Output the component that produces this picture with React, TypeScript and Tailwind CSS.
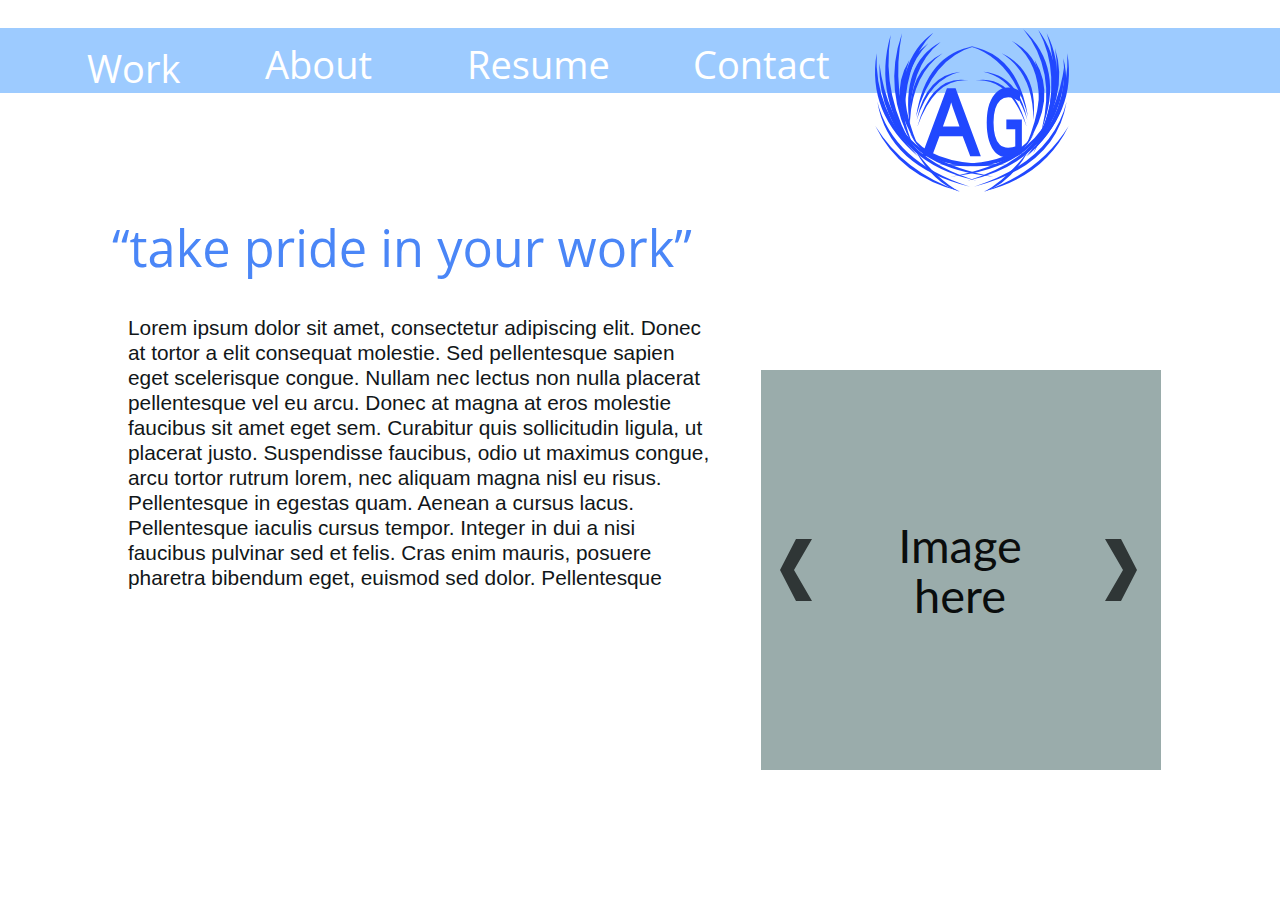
const navLinks = [
  { label: 'About', className: 'w-[202px]' },
  { label: 'Resume', className: 'w-[226px]' },
  { label: 'Contact', className: 'w-[180px]' },
];

const bodyLines = [
  'Lorem ipsum dolor sit amet, consectetur adipiscing elit. Donec',
  'at tortor a elit consequat molestie. Sed pellentesque sapien',
  'eget scelerisque congue. Nullam nec lectus non nulla placerat',
  'pellentesque vel eu arcu. Donec at magna at eros molestie',
  'faucibus sit amet eget sem. Curabitur quis sollicitudin ligula, ut',
  'placerat justo. Suspendisse faucibus, odio ut maximus congue,',
  'arcu tortor rutrum lorem, nec aliquam magna nisl eu risus.',
  'Pellentesque in egestas quam. Aenean a cursus lacus.',
  'Pellentesque iaculis cursus tempor. Integer in dui a nisi',
  'faucibus pulvinar sed et felis. Cras enim mauris, posuere',
  'pharetra bibendum eget, euismod sed dolor. Pellentesque',
];

// tip x, tip y, control x, control y, base x, base y, thickness
const sideFeathers: number[][] = [
  [50, 100, 42, 270, 175, 410, 24],
  [58, 130, 78, 290, 180, 400, 26],
  [148, 120, 110, 230, 175, 380, 32],
  [345, 78, 215, 115, 168, 290, 22],
  [302, 155, 210, 175, 170, 300, 16],
  [326, 181, 225, 172, 172, 320, 14],
  [46, 318, 120, 470, 300, 514, -18],
  [52, 245, 85, 440, 330, 500, -20],
  [72, 225, 110, 430, 350, 482, -20],
  [110, 300, 165, 445, 400, 470, -20],
  [150, 340, 205, 465, 438, 432, -24],
  [165, 390, 220, 490, 300, 516, -16],
];

const leftTips: number[][] = [
  [92, 45, 62, 230, 170, 400, 26],
  [126, 40, 92, 210, 160, 380, 26],
  [220, 38, 125, 130, 135, 330, 26],
  [242, 66, 145, 140, 150, 320, 26],
  [205, 70, 125, 150, 130, 300, 22],
  [248, 100, 160, 160, 150, 300, 18],
];

// the right wing reaches higher than the left one, in the logo's own coordinates
const rightTips: number[][] = [
  [490, 28, 590, 150, 545, 330, -26],
  [535, 30, 605, 160, 550, 340, -26],
  [560, 40, 615, 190, 520, 400, -24],
  [585, 85, 610, 220, 510, 400, -22],
  [610, 115, 630, 270, 500, 410, -22],
  [455, 62, 560, 140, 530, 310, -24],
  [425, 100, 520, 160, 520, 300, -18],
];

function Feather({ f }: { f: number[] }) {
  const [tx, ty, cx, cy, bx, by, w] = f;
  const dx = bx - tx;
  const dy = by - ty;
  const len = Math.hypot(dx, dy);
  const ox = cx + (-dy / len) * w;
  const oy = cy + (dx / len) * w;
  return <path d={`M${tx} ${ty}Q${cx} ${cy} ${bx} ${by}Q${ox} ${oy} ${tx} ${ty}Z`} />;
}

function Logo() {
  return (
    <svg viewBox="0 0 660 540" className="absolute left-[860px] top-[-8px] w-[220px] h-[180px]" fill="#2148ff">
      {[...sideFeathers, ...leftTips].map((f, i) => (
        <Feather key={i} f={f} />
      ))}
      <g transform="matrix(-1 0 0 1 672 0)">
        {sideFeathers.map((f, i) => (
          <Feather key={i} f={f} />
        ))}
      </g>
      {rightTips.map((f, i) => (
        <Feather key={i} f={f} />
      ))}
      <g fontFamily="'Noto Sans', sans-serif" fontSize="272" stroke="#2148ff" strokeWidth="7">
        <text x="190" y="405" textLength="168" lengthAdjust="spacingAndGlyphs">
          A
        </text>
        <text x="372" y="405" textLength="124" lengthAdjust="spacingAndGlyphs">
          G
        </text>
      </g>
    </svg>
  );
}

export default function App() {
  return (
    <div className="min-h-[900px] bg-white pt-[28px] font-['Open_Sans',sans-serif]">
      <header className="relative h-[65px] bg-[#9dcbff] text-white text-[38px] flex pl-[87px]">
        <a className="w-[178px] leading-[52px] pt-[14px]">Work</a>
        {navLinks.map((link) => (
          <a key={link.label} className={`${link.className} leading-[54px] pt-[9px]`}>
            {link.label}
          </a>
        ))}
        <Logo />
      </header>

      <main className="flex pl-[112px] pt-[120px]">
        <section className="w-[649px]">
          <h1 className="text-[50.5px] leading-[70px] text-[#4a86f7]">“take pride in your work”</h1>
          <p className="mt-[32px] ml-[16px] text-[20.83px] leading-[25px] text-[#111618] font-['Liberation_Sans',sans-serif] whitespace-nowrap">
            {bodyLines.map((line) => (
              <span key={line} className="block">
                {line}
              </span>
            ))}
          </p>
        </section>
        <section className="mt-[157px] w-[400px] h-[400px] bg-[#9aacab] flex items-center justify-between pl-[19px] pr-[24px]">
          <svg viewBox="0 0 32 62" className="w-[32px] h-[62px]" fill="#2f3636">
            <path d="M16 0H32L14 31L32 62H16L0 31Z" />
          </svg>
          <div className="ml-[3px] text-center font-['Lato',sans-serif] text-[47px] leading-[50px] text-[#0a0d0d]">
            <span className="block">Image</span>
            <span className="block">here</span>
          </div>
          <svg viewBox="0 0 32 62" className="w-[32px] h-[62px]" fill="#2f3636">
            <path d="M0 0H16L32 31L16 62H0L18 31Z" />
          </svg>
        </section>
      </main>
    </div>
  );
}
